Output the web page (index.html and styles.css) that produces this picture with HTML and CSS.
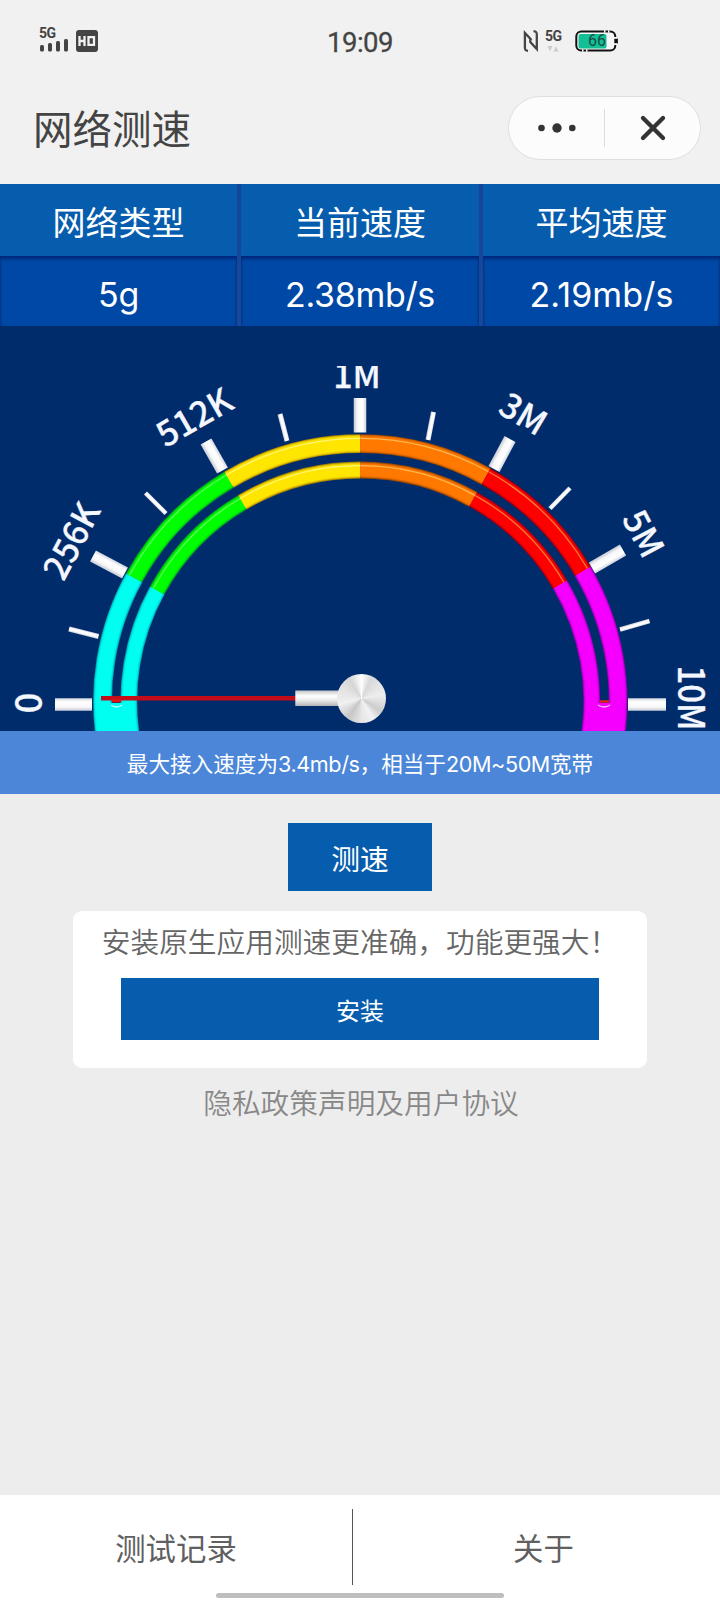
FILE: index.html
```html
<!DOCTYPE html>
<html lang="zh-CN">
<head>
<meta charset="utf-8">
<title>网络测速</title>
<link rel="stylesheet" href="styles.css">
</head>
<body>
<div class="app">
  <header class="status">
    <div class="status-left">
      <div class="signal">
        <span class="net">5G</span>
        <svg width="30" height="14" viewBox="0 0 30 14"><g fill="#444"><rect x="1" y="6" width="4" height="6.500" rx="1.500"/><rect x="9" y="4" width="4" height="8.500" rx="1.500"/><rect x="17" y="2" width="4" height="10.500" rx="1.500"/><rect x="25" y="0" width="4" height="12.500" rx="1.500"/></g></svg>
      </div>
      <svg class="hd" width="22" height="22" viewBox="0 0 22 22"><rect width="22" height="22" rx="3" fill="#444"/><path d="M3.500 6v10M8.500 6v10M3.500 11h5M12.500 7.100h5.500v7.800h-5.500z" fill="none" stroke="#f1f1f1" stroke-width="2.300"/></svg>
    </div>
    <time class="clock">19:09</time>
    <div class="status-right">
      <svg width="16" height="22" viewBox="0 0 16 22"><path d="M5 20.800C2.600 20.600 1.900 20 1.900 17.500V3L8.500 10M10.500 1.200c2.600.2 3.300.8 3.300 3.300V19L7.300 12V8.500" fill="none" stroke="#444" stroke-width="2.300"/></svg>
      <div class="net-data">
        <span class="net">5G</span>
        <svg width="12" height="7" viewBox="0 0 12 7"><path d="M.5 1h5L3 6.500zM6.500 6.500h5L9 1z" fill="#ccc"/></svg>
      </div>
      <div class="battery">
        <svg width="44" height="22" viewBox="0 0 44 22"><rect x="1.300" y="1.500" width="39" height="19" rx="5" fill="#f6f6f6" stroke="#111" stroke-width="2"/><path d="M41.900 8.500v5" stroke="#111" stroke-width="2"/><path d="M29 1.500h1.500M33 1.500h1.500M7 20.500h1.500M11 20.500h1.500" stroke="#f6f6f6" stroke-width="2.600"/><path d="M40.500 7v1.800M40.500 13.200v1.800" stroke="#f6f6f6" stroke-width="3"/><rect x="3.500" y="4" width="28" height="14.500" rx="2" fill="#14bf96"/></svg>
        <span class="level">66</span>
      </div>
    </div>
  </header>

  <div class="titlebar">
    <h1 class="title">网络测速</h1>
    <div class="capsule">
      <svg class="capsule-half" width="95" height="62" viewBox="0 0 95 62"><g fill="#333"><circle cx="32.500" cy="31" r="3.300"/><circle cx="48" cy="31" r="4.700"/><circle cx="63.300" cy="31" r="3.300"/></g></svg>
      <span class="capsule-line"></span>
      <svg class="capsule-half" width="95" height="62" viewBox="0 0 95 62"><path d="M38 21l20 20M58 21L38 41" stroke="#333" stroke-width="4.300" stroke-linecap="round"/></svg>
    </div>
  </div>

  <section class="stats">
    <div class="stat"><div class="stat-name">网络类型</div><div class="stat-value">5g</div></div>
    <div class="stat"><div class="stat-name">当前速度</div><div class="stat-value">2.38mb/s</div></div>
    <div class="stat"><div class="stat-name">平均速度</div><div class="stat-value stat-average">2.19mb/s</div></div>
  </section>

  <svg class="gauge" width="720" height="405" viewBox="0 326 720 405">
    <defs>
      <linearGradient id="tick" x1="0" y1="0" x2="0" y2="1"><stop offset="0" stop-color="#d2d5df"/><stop offset=".3" stop-color="#fff"/><stop offset=".7" stop-color="#f8f8fa"/><stop offset="1" stop-color="#c4c8d4"/></linearGradient>
      <linearGradient id="stem" x1="0" y1="0" x2="0" y2="1"><stop offset="0" stop-color="#c4c4c4"/><stop offset=".35" stop-color="#fff"/><stop offset=".6" stop-color="#eee"/><stop offset="1" stop-color="#b4b4b8"/></linearGradient>
      <clipPath id="frame"><rect x="0" y="366" width="720" height="365"/></clipPath>
    </defs>
    <g clip-path="url(#frame)">
      <g id="rings" fill="none"></g>
      <g id="ticks" fill="url(#tick)"></g>
      <path d="M111 705q5 4 11 0M598 705q6 4 12 0" fill="none" stroke="#fff" stroke-opacity=".75" stroke-width="1.300"/>
      <path d="M600 701.500h9" stroke="#e5211b" stroke-width="2.500"/>
      <g class="gauge-label">
        <text class="wide" transform="translate(41.500 703) rotate(-90)">0</text>
        <text transform="translate(82.500 546.500) rotate(-62)">256K</text>
        <text transform="translate(200.500 428) rotate(-30)">512K</text>
        <text transform="translate(357 388)">1M</text>
        <text transform="translate(517 424.500) rotate(31)">3M</text>
        <text transform="translate(632.500 539.500) rotate(62)">5M</text>
        <text class="wide" transform="translate(678 698) rotate(90)" textLength="65" lengthAdjust="spacingAndGlyphs">10M</text>
      </g>
      <rect x="101" y="696" width="196" height="4.500" fill="#c40d18"/>
      <rect x="112" y="699" width="9" height="3.500" rx="1" fill="#e31212"/>
      <rect x="295.300" y="690.500" width="50" height="15.500" fill="url(#stem)"/>
    </g>
    <foreignObject x="336.500" y="673.500" width="50" height="50"><div class="hub"></div></foreignObject>
  </svg>

  <p class="banner">最大接入速度为<span class="latin">3.4mb/s</span>，相当于<span class="latin">20M~50M</span>宽带</p>

  <main class="main">
    <button class="btn btn-test">测速</button>
    <section class="card">
      <p class="card-text">安装原生应用测速更准确，功能更强大！</p>
      <button class="btn btn-install">安装</button>
    </section>
    <a class="policy">隐私政策声明及用户协议</a>
  </main>

  <nav class="nav">
    <a class="nav-item nav-first">测试记录</a>
    <span class="nav-line"></span>
    <a class="nav-item">关于</a>
    <span class="home-bar"></span>
  </nav>
</div>
<script src="gauge.js"></script>
</body>
</html>
```
FILE: gauge.js
```js
const NS = 'http://www.w3.org/2000/svg';
const CX = 360.3, CY = 701.5;

function add(parent, name, attrs) {
  const el = document.createElementNS(NS, name);
  for (const key in attrs) el.setAttribute(key, attrs[key]);
  parent.appendChild(el);
}

// Angles are degrees above the left horizon, clockwise.
function arc(r, from, to) {
  const point = a => {
    const t = a * Math.PI / 180;
    return (CX - r * Math.cos(t)).toFixed(2) + ' ' + (CY - r * Math.sin(t)).toFixed(2);
  };
  return `M${point(from)}A${r} ${r} 0 0 1 ${point(to)}`;
}

const rings = document.getElementById('rings');
const segments = [
  [-10, 28.7, '#00fff0', '#00a5b4', null],
  [28.7, 59.4, '#00ff00', '#008a2c', '#6aff63'],
  [59.4, 90, '#ffe600', '#a88400', '#fff78a'],
  [90, 119.2, '#ff7800', '#9c4800', '#ffc35c'],
  [119.2, 149.7, '#ff0000', '#8a0018', '#ff8a3c'],
  [149.7, 190, '#f500ff', '#8a00a8', null]
];
for (const [from, to, color, edge, shine] of segments) {
  for (const [r, width] of [[257.8, 18.8], [231.5, 16.8]]) {
    add(rings, 'path', { d: arc(r, from, to), stroke: edge, 'stroke-width': width });
    add(rings, 'path', { d: arc(r, from, to), stroke: color, 'stroke-width': width - 1.6, 'stroke-opacity': .6 });
    add(rings, 'path', { d: arc(r, from, to), stroke: color, 'stroke-width': width - 3.6, 'stroke-opacity': .8 });
    add(rings, 'path', { d: arc(r, from, to), stroke: color, 'stroke-width': width - 6 });
    if (shine) add(rings, 'path', { d: arc(r + width / 2 - 4, from, to), stroke: shine, 'stroke-width': 1.3, 'stroke-opacity': .85 });
  }
}
add(rings, 'path', { d: 'M97 703H134.500V732H97z', fill: '#00fff0' });
add(rings, 'path', { d: 'M586 703H624V732H586z', fill: '#f500ff' });

const ticks = document.getElementById('ticks');
const marks = [
  [55, 704.5, 92, 704.5, 12.5], [93, 556, 125, 573, 12.5], [206, 441.5, 222.5, 470.5, 12.5],
  [360, 398, 360, 432.5, 12.5], [510, 439, 494, 469, 12.5], [623, 550, 592, 568, 12.5], [628, 704.5, 666, 704.5, 12.5],
  [69, 629, 98.5, 636.5, 5], [145.5, 493, 166, 513.5, 4.5], [280, 414, 287, 441, 5],
  [433.5, 412, 428, 440, 5], [570, 488, 550, 508.5, 4.5], [649.5, 621, 620, 629.5, 4.5]
];
for (const [x1, y1, x2, y2, width] of marks) {
  const length = Math.hypot(x2 - x1, y2 - y1);
  const angle = Math.atan2(y2 - y1, x2 - x1) * 180 / Math.PI;
  add(ticks, 'rect', {
    x: 0, y: -width / 2, width: length, height: width,
    transform: `translate(${x1} ${y1}) rotate(${angle})`
  });
}
```
FILE: styles.css
```css
* { box-sizing: border-box; }
body { margin: 0; font-family: "Noto Sans CJK SC", sans-serif; background: #ededed; }
h1, p { margin: 0; font-weight: 400; }
svg { display: block; }
.app { width: 720px; height: 1600px; display: flex; flex-direction: column; overflow: hidden; }

.status { height: 84px; flex: none; background: #f1f1f1; display: grid; grid-template-columns: 1fr auto 1fr; padding: 27px 101px 0 39px; color: #444; }
.status-left { display: flex; gap: 7px; }
.signal { width: 30px; }
.net { display: block; font: 700 14px/12px Roboto, sans-serif; letter-spacing: -.5px; }
.hd { margin-top: 3px; }
.clock { font: 400 27.500px/31px Roboto, sans-serif; -webkit-text-stroke: .3px #444; letter-spacing: -.5px; margin-left: 62px; }
.status-right { display: flex; justify-content: flex-end; padding-top: 3px; }
.net-data { width: 18px; margin: 0 12px 0 6px; }
.net-data svg { margin: 3px 0 0 2px; }
.battery { display: grid; }
.battery > * { grid-area: 1 / 1; }
.level { font: 400 16px/22px Roboto, sans-serif; color: #174d43; padding-left: 13px; }

.titlebar { height: 100px; flex: none; background: #f1f1f1; display: flex; justify-content: space-between; align-items: flex-start; padding: 12px 19px 0 33px; }
.title { font-size: 39.500px; line-height: 62px; color: #444; }
.capsule { display: flex; align-items: center; width: 193px; height: 64px; background: #fcfcfc; border: 1px solid #dfdfdf; border-radius: 32px; overflow: hidden; }
.capsule-half { flex: none; }
.capsule-line { width: 1px; height: 38px; background: #ddd; flex: none; }

.stats { height: 142px; flex: none; display: grid; grid-template-columns: 237px 238px 237px; gap: 4px; background: linear-gradient(#144597, #18489c); color: #fff; text-align: center; }
.stat-name { height: 72px; background: #065cad; font-size: 33px; line-height: 74px; }
.stat-value { height: 70px; background: #0048a5; box-shadow: inset 0 4px 3px -1px #00297c, inset 2px 0 2px -1px #003888, inset -2px 0 2px -1px #003888; font: 400 34px/78px Inter, sans-serif; letter-spacing: -.3px; }
.stat-average { letter-spacing: .1px; }

.gauge { flex: none; background: #002c6c; }
.gauge-label { font: 500 34px "Noto Sans CJK SC", sans-serif; fill: #f5f7ff; stroke: #f5f7ff; stroke-width: .25px; text-anchor: middle; }
.wide { font-size: 36.500px; }
.hub { width: 49px; height: 49px; border-radius: 50%; background: conic-gradient(#fff, #d8d8d8 25deg, #eee 80deg, #ccc 125deg, #f2f2f2 150deg, #e6e6e6 180deg, #c6c6c6 215deg, #f0f0f0 255deg, #e2e2e2 300deg, #d6d6d6 330deg, #fff); }

.banner { height: 63px; flex: none; background: #4b86d8; color: #fff; font-size: 21.600px; line-height: 64px; text-align: center; white-space: nowrap; }
.latin { font-family: Inter, sans-serif; font-size: 21.600px; letter-spacing: -.4px; }

.main { flex: 1; display: flex; flex-direction: column; align-items: center; padding-top: 29px; background: #ededed; }
.btn { border: 0; border-radius: 0; padding: 0; background: #065cad; color: #fff; font-family: inherit; }
.btn-test { width: 144px; height: 68px; font-size: 28.800px; line-height: 69px; }
.card { width: 574px; height: 157px; margin-top: 20px; background: #fff; border-radius: 9px; display: flex; flex-direction: column; align-items: center; }
.card-text { font-size: 28.700px; line-height: 60px; height: 67px; color: #666; font-weight: 350; white-space: nowrap; }
.btn-install { width: 478px; height: 62px; font-size: 24px; line-height: 63px; }
.policy { margin: 13px 0 0 2px; font-size: 28.700px; line-height: 42px; color: #888; font-weight: 350; }

.nav { position: relative; height: 105px; flex: none; background: #fff; display: flex; align-items: flex-start; padding-top: 14px; color: #606060; font-size: 30.400px; line-height: 76px; text-align: center; }
.nav-item { flex: 1 1 0; }
.nav-first { flex: 0 0 352px; }
.nav-line { width: 1px; height: 76px; background: #555; }
.nav-item:not(.nav-first) { padding-left: 14px; }
.home-bar { position: absolute; left: 216px; bottom: 2px; width: 288px; height: 5px; border-radius: 3px; background: #bebebe; }
```
